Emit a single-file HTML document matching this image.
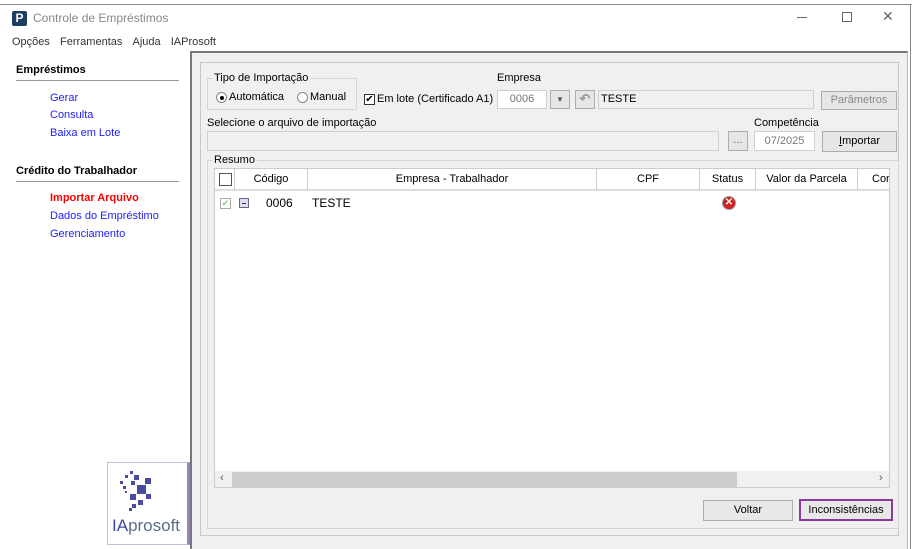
<!DOCTYPE html>
<html><head><meta charset="utf-8"><style>
*{box-sizing:border-box;margin:0;padding:0}
body{width:916px;height:549px;background:#fff;font-family:"Liberation Sans",sans-serif;font-size:11px;color:#000;position:relative;overflow:hidden}
.a{position:absolute}
.t{position:absolute;white-space:nowrap}
.in{position:absolute;background:#fff;border:1px solid #d0d0d0}
.btn{position:absolute;background:#e6e6e6;border:1px solid #adadad;text-align:center;line-height:17px}
.fs{position:absolute;border:1px solid #d5d5d5}
.lg{position:absolute;background:#f0f0f0;padding:0 2px;white-space:nowrap;line-height:12px}
.lk{position:absolute;color:#2020ff;font-size:11px;white-space:nowrap}
.hd{position:absolute;top:0;height:21px;line-height:21px;text-align:center;border-right:1px solid #ccc;font-size:11px}
</style></head><body>
<div class="a" style="left:0;top:4px;width:912px;height:1px;background:#888"></div>
<div class="a" style="left:910px;top:4px;width:1px;height:545px;background:#888"></div>
<div class="a" style="left:12px;top:11px;width:15px;height:15px;background:#1d3d63;border-radius:2px;color:#fff;font-weight:bold;font-size:12px;line-height:15px;text-align:center">P</div>
<div class="t" style="left:33px;top:11px;font-size:12px;color:#888">Controle de Empréstimos</div>
<div class="a" style="left:797px;top:17px;width:10px;height:1px;background:#666"></div>
<div class="a" style="left:842px;top:12px;width:10px;height:10px;border:1px solid #666"></div>
<div class="t" style="left:882px;top:8px;font-size:14px;color:#666">✕</div>
<div class="t" style="left:12px;top:36px;font-size:11px;color:#333;word-spacing:2px">Opções &nbsp;Ferramentas &nbsp;Ajuda &nbsp;IAProsoft</div>

<div class="t" style="left:16px;top:64px;font-weight:bold;font-size:11px">Empréstimos</div>
<div class="a" style="left:16px;top:80px;width:163px;height:1px;background:#999"></div>
<div class="lk" style="left:50px;top:92px">Gerar</div>
<div class="lk" style="left:50px;top:109px">Consulta</div>
<div class="lk" style="left:50px;top:127px">Baixa em Lote</div>
<div class="t" style="left:16px;top:165px;font-weight:bold;font-size:11px">Crédito do Trabalhador</div>
<div class="a" style="left:16px;top:181px;width:163px;height:1px;background:#999"></div>
<div class="lk" style="left:50px;top:192px;color:#f00;font-weight:bold">Importar Arquivo</div>
<div class="lk" style="left:50px;top:210px">Dados do Empréstimo</div>
<div class="lk" style="left:50px;top:228px">Gerenciamento</div>

<div class="a" style="left:107px;top:462px;width:83px;height:83px;border:1px solid #c8bcdc;border-right:3px solid #9a82c8;background:#fff"></div>
<svg class="a" style="left:120px;top:470px" width="50" height="45" viewBox="0 0 50 45" fill="#4a4aa0">
<rect x="10" y="1" width="3" height="3"/><rect x="5" y="5" width="3" height="3"/><rect x="14" y="5" width="5" height="5"/><rect x="25" y="8" width="6" height="6"/><rect x="0" y="11" width="3" height="3"/><rect x="11" y="11" width="4" height="4"/><rect x="17" y="15" width="9" height="9"/><rect x="3" y="16" width="3" height="3"/><rect x="5" y="21" width="2" height="2"/><rect x="10" y="24" width="6" height="6"/><rect x="26" y="24" width="5" height="5"/><rect x="18" y="30" width="5" height="5"/><rect x="12" y="34" width="4" height="4"/><rect x="9" y="38" width="3" height="3"/></svg>
<div class="t" style="left:112px;top:516px;font-size:17px;color:#5a6f86"><span style="color:#3a4a9a">IA</span>prosoft</div>

<div class="a" style="left:190px;top:51px;width:718px;height:498px;background:#f0f0f0;border-top:2px solid #777;border-left:2px solid #777;border-right:1px solid #bbb"></div>
<div class="a" style="left:200px;top:62px;width:699px;height:474px;border:1px solid #c8c8c8"></div>

<div class="fs" style="left:207px;top:78px;width:150px;height:32px"></div>
<div class="lg" style="left:212px;top:72px">Tipo de Importação</div>
<div class="a" style="left:216px;top:92px;width:11px;height:11px;border:1px solid #888;border-radius:50%;background:#fff"></div>
<div class="a" style="left:220px;top:96px;width:4px;height:4px;border-radius:50%;background:#000"></div>
<div class="t" style="left:229px;top:91px">Automática</div>
<div class="a" style="left:297px;top:92px;width:11px;height:11px;border:1px solid #888;border-radius:50%;background:#fff"></div>
<div class="t" style="left:310px;top:91px">Manual</div>
<div class="a" style="left:364px;top:94px;width:11px;height:11px;border:1px solid #333;background:#fff;font-size:10px;line-height:9px;text-align:center">✔</div>
<div class="t" style="left:377px;top:93px">Em lote (Certificado A1)</div>

<div class="t" style="left:497px;top:72px">Empresa</div>
<div class="in" style="left:497px;top:90px;width:50px;height:19px;color:#777;text-align:center;line-height:17px">0006</div>
<div class="btn" style="left:550px;top:90px;width:20px;height:19px;font-size:8px;color:#555">▼</div>
<div class="btn" style="left:575px;top:90px;width:20px;height:19px;color:#999;font-weight:bold;font-size:13px;line-height:16px">↶</div>
<div class="a" style="left:598px;top:90px;width:216px;height:19px;border:1px solid #d0d0d0;line-height:17px;padding-left:2px">TESTE</div>
<div class="btn" style="left:821px;top:91px;width:76px;height:19px;color:#888">Parâmetros</div>

<div class="t" style="left:207px;top:117px">Selecione o arquivo de importação</div>
<div class="a" style="left:207px;top:131px;width:512px;height:20px;border:1px solid #d0d0d0"></div>
<div class="btn" style="left:728px;top:131px;width:20px;height:20px;color:#666;line-height:16px">...</div>
<div class="t" style="left:754px;top:117px">Competência</div>
<div class="in" style="left:754px;top:131px;width:61px;height:20px;color:#777;text-align:center;line-height:18px">07/2025</div>
<div class="btn" style="left:822px;top:131px;width:75px;height:21px;line-height:19px"><u>I</u>mportar</div>

<div class="fs" style="left:207px;top:160px;width:692px;height:369px"></div>
<div class="lg" style="left:212px;top:154px">Resumo</div>
<div class="a" style="left:214px;top:168px;width:676px;height:320px;background:#fff;border:1px solid #ccc;overflow:hidden">
 <div class="a" style="left:0;top:0;width:676px;height:22px;border-bottom:2px solid #ddd"></div>
 <div class="hd" style="left:0;width:20px"><div class="a" style="left:4px;top:4px;width:13px;height:13px;border:1px solid #555"></div></div>
 <div class="hd" style="left:20px;width:73px">Código</div>
 <div class="hd" style="left:93px;width:289px">Empresa - Trabalhador</div>
 <div class="hd" style="left:382px;width:103px">CPF</div>
 <div class="hd" style="left:485px;width:56px">Status</div>
 <div class="hd" style="left:541px;width:102px">Valor da Parcela</div>
 <div class="hd" style="left:643px;width:40px;border:0;text-align:left;padding-left:14px">Cor</div>
 <div class="a" style="left:5px;top:29px;width:11px;height:11px;border:1px solid #aaa;color:#8c8;font-size:9px;line-height:9px;text-align:center">✔</div>
 <div class="a" style="left:24px;top:29px;width:10px;height:10px;border:1px solid #668;background:#dde;"><div class="a" style="left:2px;top:4px;width:4px;height:1px;background:#334"></div></div>
 <div class="t" style="left:51px;top:27px;font-size:12px">0006</div>
 <div class="t" style="left:97px;top:27px;font-size:12px">TESTE</div>
 <div class="a" style="left:507px;top:27px;width:14px;height:14px;border-radius:50%;background:#d02020;border:1px solid #999;color:#fff;font-size:10px;line-height:12px;text-align:center;font-weight:bold">✕</div>
 <div class="a" style="left:0;top:302px;width:676px;height:17px;background:#f0f0f0"></div>
 <div class="a" style="left:17px;top:303px;width:505px;height:15px;background:#cdcdcd"></div>
 <div class="t" style="left:5px;top:303px;color:#555">‹</div>
 <div class="t" style="left:664px;top:303px;color:#555">›</div>
</div>
<div class="btn" style="left:703px;top:500px;width:90px;height:21px;background:#e8e8e8;line-height:19px">Voltar</div>
<div class="a" style="left:799px;top:499px;width:94px;height:22px;border:2px solid #8a3a9a;background:#e8e8e8;text-align:center;line-height:18px">Inconsistências</div>
</body></html>
